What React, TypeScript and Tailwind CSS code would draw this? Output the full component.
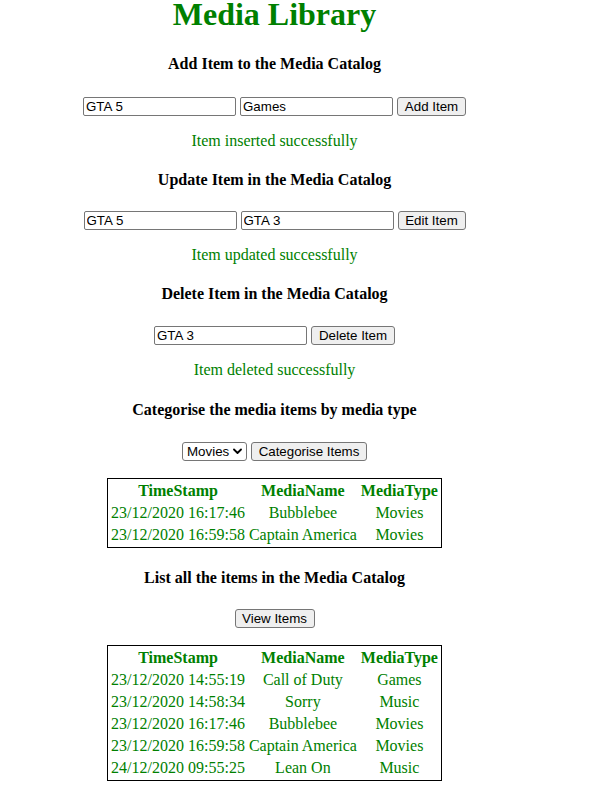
import React from "react";

const serif = { fontFamily: '"Liberation Serif", "Times New Roman", serif' };

function TextInput({ value, className = "" }: { value: string; className?: string }) {
  return (
    <input
      readOnly
      value={value}
      className={`h-[19px] w-[153px] rounded-[2px] border border-[#767676] bg-white px-[2px] text-[13.33px] leading-[15px] text-black outline-none font-['Liberation_Sans',Arial,sans-serif] ${className}`}
    />
  );
}

function Btn({ label, w }: { label: string; w: string }) {
  return (
    <button
      className={`h-[19px] ${w} rounded-[3px] border border-[#767676] bg-[#efefef] p-0 text-center text-[13.33px] leading-[15px] text-black font-['Liberation_Sans',Arial,sans-serif]`}
    >
      {label}
    </button>
  );
}

function H4({ children, mt }: { children: React.ReactNode; mt: string }) {
  return <h4 className={`${mt} text-[16px] font-bold leading-[18px] text-black`}>{children}</h4>;
}

function Msg({ children }: { children: React.ReactNode }) {
  return <p className="mt-[16px] text-[16px] leading-[18px] text-[#008000]">{children}</p>;
}

type Row = [string, string, string];

function DataTable({ rows, mt }: { rows: Row[]; mt: string }) {
  return (
    <table className={`${mt} mx-auto border border-black border-separate border-spacing-[2px] text-[16px] leading-[18px] text-[#008000]`}>
      <thead>
        <tr>
          <th className="p-[1px] text-center font-bold">TimeStamp</th>
          <th className="p-[1px] text-center font-bold">MediaName</th>
          <th className="p-[1px] text-center font-bold">MediaType</th>
        </tr>
      </thead>
      <tbody>
        {rows.map((r, i) => (
          <tr key={i}>
            <td className="p-[1px] text-center">{r[0]}</td>
            <td className="p-[1px] text-center">{r[1]}</td>
            <td className="p-[1px] text-center">{r[2]}</td>
          </tr>
        ))}
      </tbody>
    </table>
  );
}

export default function App() {
  const cat: Row[] = [
    ["23/12/2020 16:17:46", "Bubblebee", "Movies"],
    ["23/12/2020 16:59:58", "Captain America", "Movies"],
  ];
  const all: Row[] = [
    ["23/12/2020 14:55:19", "Call of Duty", "Games"],
    ["23/12/2020 14:58:34", "Sorry", "Music"],
    ["23/12/2020 16:17:46", "Bubblebee", "Movies"],
    ["23/12/2020 16:59:58", "Captain America", "Movies"],
    ["24/12/2020 09:55:25", "Lean On", "Music"],
  ];
  return (
    <div className="min-h-[790px] w-[589px] bg-white" style={serif}>
      <div className="w-[549px] text-center">
        <h1 className="text-[32px] font-bold leading-[28px] text-[#008000]">Media Library</h1>

        <H4 mt="mt-[27px]">Add Item to the Media Catalog</H4>
        <div className="mt-[24px] flex justify-center gap-[4px]">
          <TextInput value="GTA 5" />
          <TextInput value="Games" />
          <Btn label="Add Item" w="w-[69px]" />
        </div>
        <Msg>Item inserted successfully</Msg>

        <H4 mt="mt-[21px]">Update Item in the Media Catalog</H4>
        <div className="mt-[22px] flex justify-center gap-[4px]">
          <TextInput value="GTA 5" />
          <TextInput value="GTA 3" />
          <Btn label="Edit Item" w="w-[68px]" />
        </div>
        <Msg>Item updated successfully</Msg>

        <H4 mt="mt-[21px]">Delete Item in the Media Catalog</H4>
        <div className="mt-[23px] flex justify-center gap-[4px]">
          <TextInput value="GTA 3" />
          <Btn label="Delete Item" w="w-[84px]" />
        </div>
        <Msg>Item deleted successfully</Msg>

        <H4 mt="mt-[22px]">Categorise the media items by media type</H4>
        <div className="mt-[23px] flex justify-center gap-[4px]">
          <div className="relative flex h-[19px] w-[65px] items-center rounded-[3px] border border-[#767676] bg-white pl-[4px] text-left text-[13.33px] leading-[15px] text-black font-['Liberation_Sans',Arial,sans-serif]">
            <span>Movies</span>
            <svg className="absolute right-[4px] top-[5px]" width="9" height="7" viewBox="0 0 9 7">
              <polyline points="1,1.5 4.5,5 8,1.5" fill="none" stroke="#000" strokeWidth="1.8" strokeLinecap="round" strokeLinejoin="round" />
            </svg>
          </div>
          <Btn label="Categorise Items" w="w-[116px]" />
        </div>
        <DataTable rows={cat} mt="mt-[17px]" />

        <H4 mt="mt-[21px]">List all the items in the Media Catalog</H4>
        <div className="mt-[22px] flex justify-center">
          <Btn label="View Items" w="w-[80px]" />
        </div>
        <DataTable rows={all} mt="mt-[17px]" />
      </div>
    </div>
  );
}
